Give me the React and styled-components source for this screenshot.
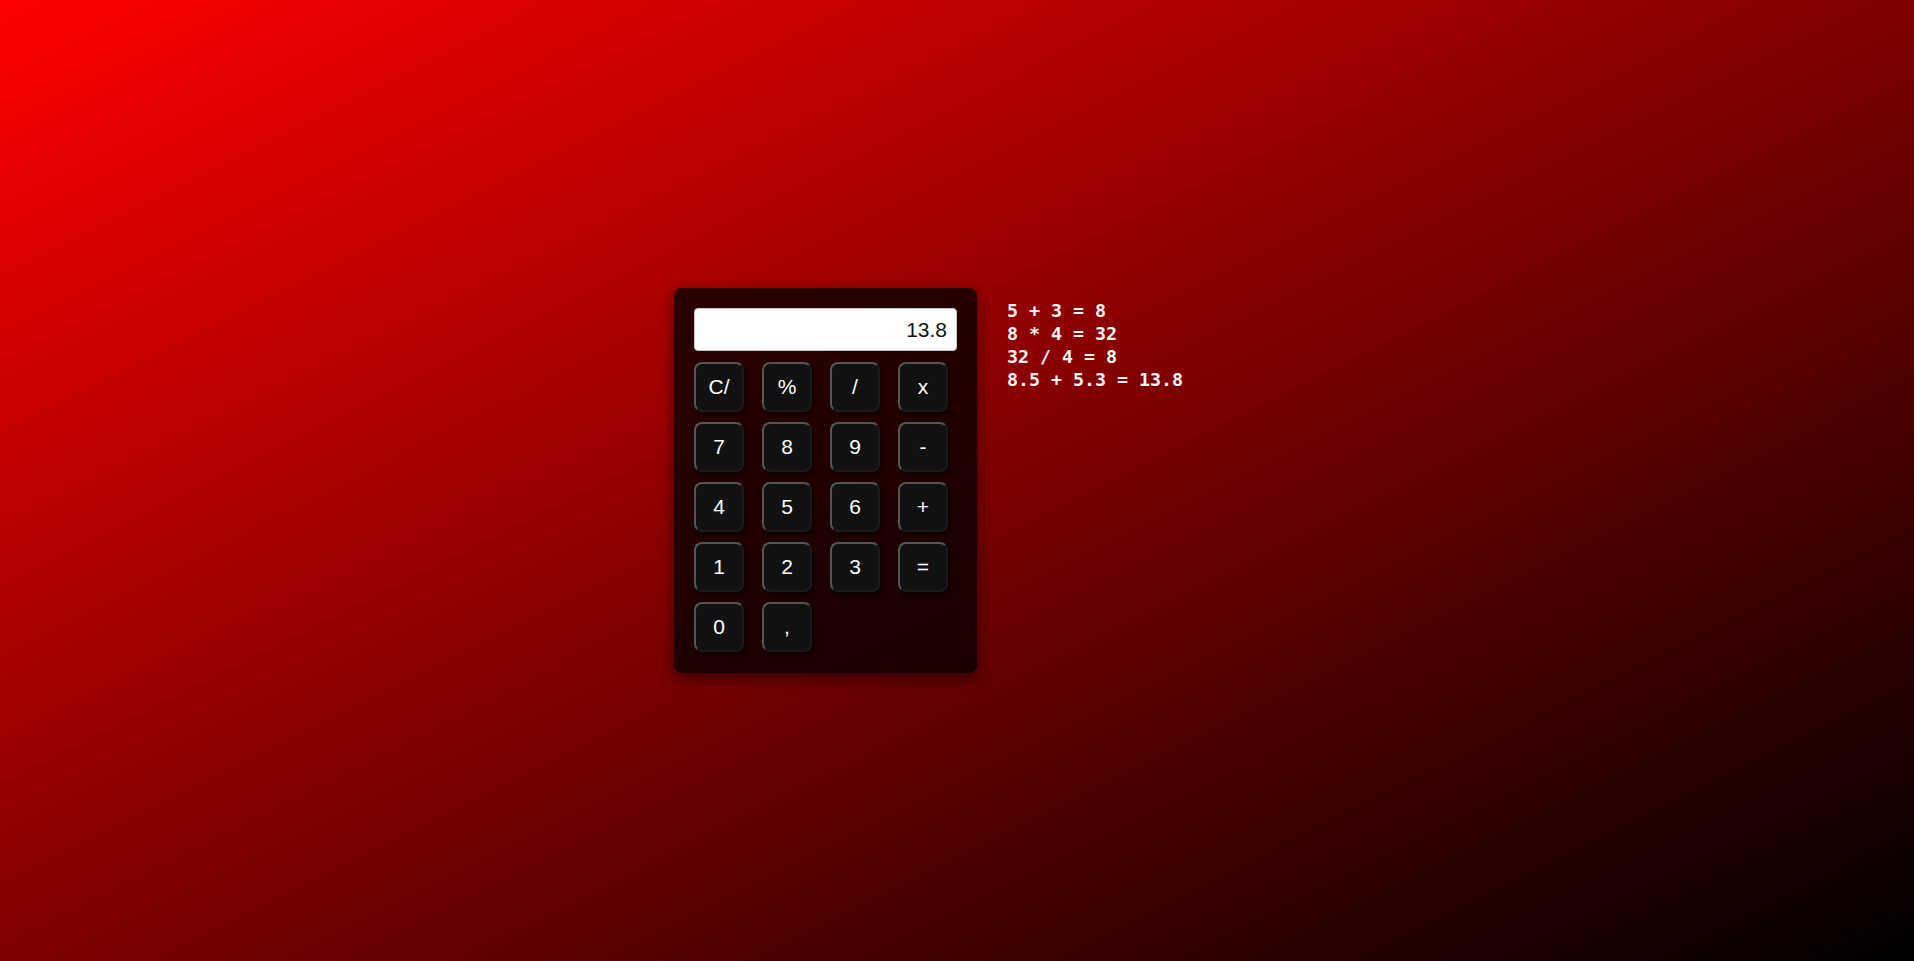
import React from 'react';
import styled, { createGlobalStyle } from 'styled-components';

const GlobalStyle = createGlobalStyle`
	html, body {
		margin: 0;
		padding: 0;
	}
	body {
		min-height: 100vh;
		background: linear-gradient(to bottom right, #ff0000, #000000);
		font-family: "Liberation Sans", Arial, sans-serif;
	}
`;

const Page = styled.div`
	min-height: 100vh;
	display: flex;
	justify-content: center;
	align-items: center;
`;

const Wrapper = styled.div`
	display: flex;
	align-items: flex-start;
	gap: 30px;
`;

const Calculator = styled.div`
	width: 263px;
	padding: 20px 20px 21px;
	background: rgba(0, 0, 0, 0.75);
	border-radius: 8px;
	box-shadow: 0 5px 15px rgba(0, 0, 0, 0.55);
`;

const Display = styled.div`
	box-sizing: border-box;
	height: 43px;
	padding: 0 9px;
	margin-bottom: 11px;
	background: white;
	border: 1px solid #c8c8c8;
	border-radius: 4px;
	display: flex;
	align-items: center;
	justify-content: flex-end;
	font-size: 21px;
	color: #111;
`;

const Keys = styled.div`
	display: grid;
	grid-template-columns: repeat(4, 50px);
	grid-auto-rows: 50px;
	column-gap: 18px;
	row-gap: 10px;
`;

const Key = styled.button`
	box-sizing: border-box;
	width: 50px;
	height: 50px;
	padding: 0;
	background: #111;
	color: white;
	font-family: "Liberation Sans", Arial, sans-serif;
	font-size: 21px;
	border-radius: 8px;
	border-top: 2px solid #555;
	border-left: 2px solid #555;
	border-right: 2px solid #1a1a1a;
	border-bottom: 2px solid #1a1a1a;
	box-shadow: 2px 3px 5px rgba(0, 0, 0, 0.6);
	cursor: pointer;
`;

const History = styled.div`
	width: 233px;
	margin-top: 11px;
	font-family: "DejaVu Sans Mono", "Liberation Mono", monospace;
	font-weight: bold;
	font-size: 18.3px;
	line-height: 23px;
	color: #f4f4f4;
`;

const keys = ['C/', '%', '/', 'x', '7', '8', '9', '-', '4', '5', '6', '+', '1', '2', '3', '=', '0', ','];

const history = ['5 + 3 = 8', '8 * 4 = 32', '32 / 4 = 8', '8.5 + 5.3 = 13.8'];

const App = () => {
	return (
		<Page>
			<GlobalStyle />
			<Wrapper>
				<Calculator>
					<Display>13.8</Display>
					<Keys>
						{keys.map(k => <Key key={k}>{k}</Key>)}
					</Keys>
				</Calculator>
				<History>
					{history.map(line => <div key={line}>{line}</div>)}
				</History>
			</Wrapper>
		</Page>
	)
}

export default App;
